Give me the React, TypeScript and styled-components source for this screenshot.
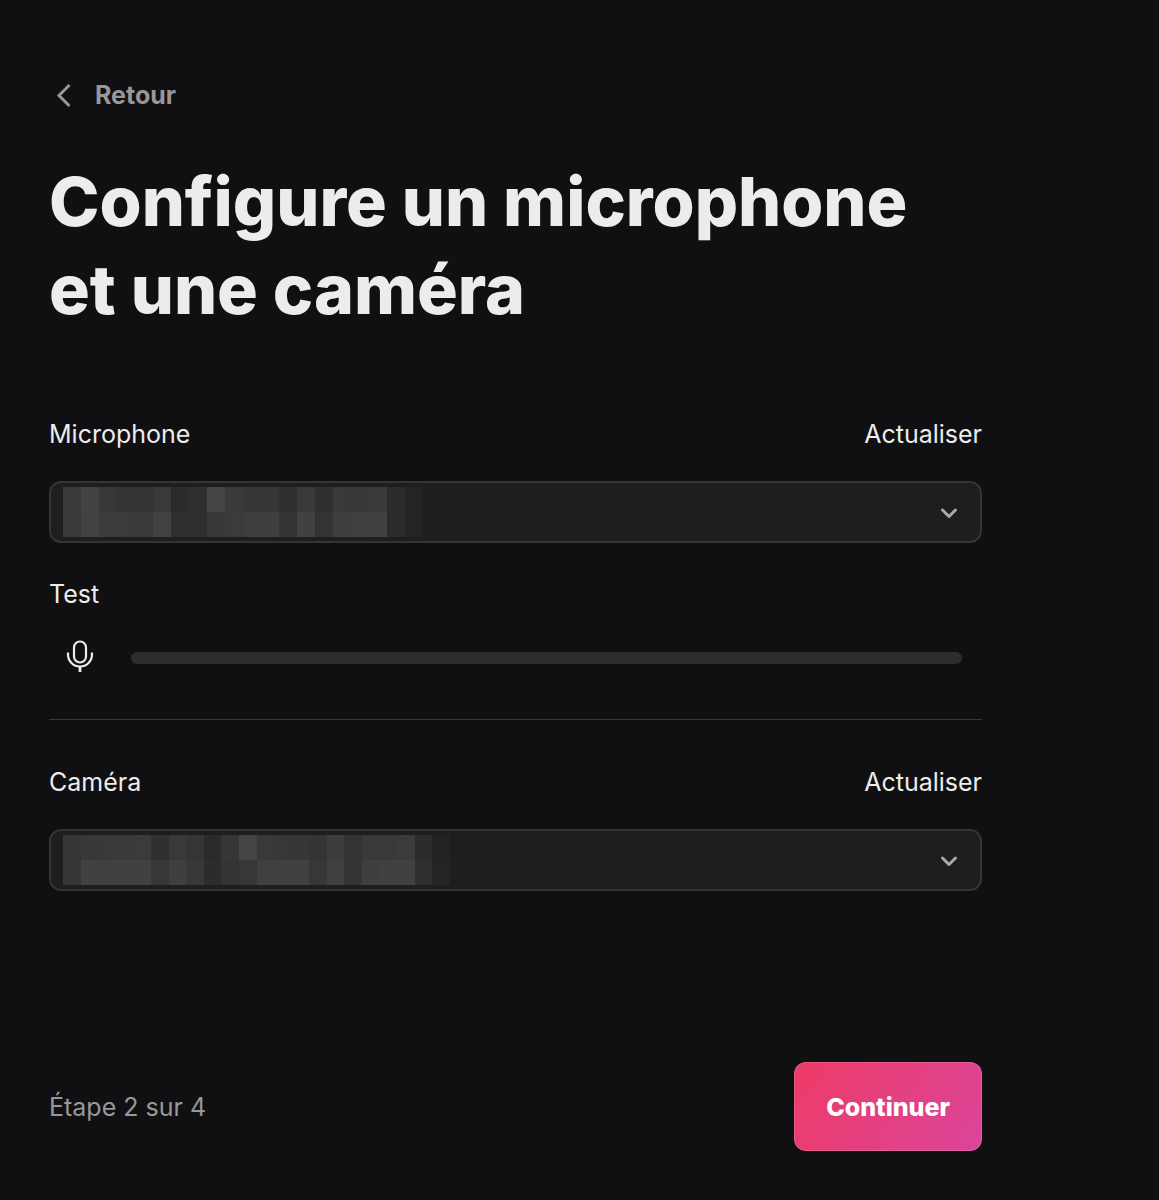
import React, { useState } from "react";
import styled, { createGlobalStyle } from "styled-components";

const GlobalStyle = createGlobalStyle`
  *, *::before, *::after { box-sizing: border-box; }
  html { background: #101012; }
  body {
    margin: 0;
    color: #ececed;
    font: 400 25px/32px Inter, "Liberation Sans", sans-serif;
  }
  button, select { font: inherit; color: inherit; }
`;

const Page = styled.main`
  display: flex;
  flex-direction: column;
  min-height: 100vh;
  padding: 79px 177px 49px 49px;
`;

const PlainButton = styled.button`
  padding: 0;
  border: 0;
  background: none;
  cursor: pointer;
`;

const BackButton = styled(PlainButton)`
  display: flex;
  align-items: center;
  align-self: flex-start;
  gap: 16px;
  color: #98989a;
  font-weight: 700;
`;

const Title = styled.h1`
  max-width: 900px;
  margin: 46px 0 0;
  font-size: 68px;
  line-height: 88px;
  font-weight: 800;
`;

const Device = styled.section<{ $top: number }>`
  margin-top: ${(p) => p.$top}px;
`;

const DeviceHeader = styled.div`
  display: flex;
  justify-content: space-between;
  margin-bottom: 31px;
`;

const SelectWrap = styled.div`
  position: relative;
  color: #a9a9ab;
`;

const SelectBox = styled.select`
  display: block;
  width: 100%;
  height: 62px;
  padding: 0 56px 0 14px;
  appearance: none;
  border: 2px solid #343436;
  border-radius: 12px;
  background: #1e1e20;
`;

const SelectArrow = styled.svg`
  position: absolute;
  top: 24px;
  right: 24px;
  pointer-events: none;
`;

const Mosaic = styled.div<{ $columns: number; $width: number }>`
  position: absolute;
  top: 6px;
  left: 14px;
  display: grid;
  grid-template-columns: repeat(${(p) => p.$columns}, 1fr);
  width: ${(p) => p.$width}px;
  height: 50px;
  pointer-events: none;
`;

const Cell = styled.span<{ $level: number }>`
  background: rgb(${(p) => p.$level}, ${(p) => p.$level}, ${(p) => p.$level + 2});
`;

const TestLabel = styled.div`
  margin-top: 35px;
`;

const TestRow = styled.div`
  display: flex;
  align-items: center;
  gap: 32px;
  height: 48px;
  margin-top: 24px;
  padding: 0 20px 0 12px;
`;

const MicIcon = styled.svg`
  flex: none;
  width: 38px;
  height: 38px;
`;

const Level = styled.progress`
  flex: 1;
  min-width: 0;
  height: 12px;
  appearance: none;
  border: 0;
  border-radius: 6px;
  background: #2d2d2f;
  overflow: hidden;

  &::-webkit-progress-bar { background: #2d2d2f; }
  &::-webkit-progress-value { background: #ececed; }
`;

const Divider = styled.hr`
  width: 100%;
  height: 1px;
  margin: 37px 0 0;
  border: 0;
  background: #3a3a3c;
`;

const Footer = styled.footer`
  display: flex;
  align-items: center;
  justify-content: space-between;
  margin-top: auto;
  color: #98989a;
`;

const ContinueButton = styled.button`
  height: 89px;
  padding: 0 31px;
  border: 1px solid rgba(255, 255, 255, 0.14);
  border-radius: 12px;
  background: linear-gradient(125deg, #ee3b66 0%, #da459a 100%) border-box;
  color: #ffffff;
  font-weight: 800;
  cursor: pointer;
`;

const MIC_TONES = [
  "3a 43 37 33 33 39 2b 2f 45 3a 36 36 30 3a 30 39 37 3a 2b 24",
  "3a 42 3c 3b 39 42 2f 2f 37 3b 3e 3f 34 41 33 3f 40 41 2c 24",
];

const CAMERA_TONES = [
  "35 38 39 3a 3b 30 39 35 2a 36 44 39 37 36 34 3d 33 39 39 3b 2c 23",
  "35 41 41 41 41 37 3f 38 2c 34 37 40 40 40 37 41 34 3f 41 41 2f 24",
];

interface DeviceSelectProps {
  id: string;
  label: string;
  tones: string[];
  maskWidth: number;
}

function DeviceSelect({ id, label, tones, maskWidth }: DeviceSelectProps) {
  const [device, setDevice] = useState("default");
  const rows = tones.map((row) => row.split(" "));
  return (
    <>
      <DeviceHeader>
        <label htmlFor={id}>{label}</label>
        <PlainButton type="button">Actualiser</PlainButton>
      </DeviceHeader>
      <SelectWrap>
        <SelectBox id={id} value={device} onChange={(e) => setDevice(e.target.value)}>
          <option value="default"></option>
        </SelectBox>
        <Mosaic $columns={rows[0].length} $width={maskWidth} aria-hidden="true">
          {rows.flat().map((tone, i) => (
            <Cell key={i} $level={parseInt(tone, 16)} />
          ))}
        </Mosaic>
        <SelectArrow width="18" height="16" viewBox="0 0 18 16" fill="none" aria-hidden="true">
          <path d="M2.5 5L9 11.5L15.5 5" stroke="currentColor" strokeWidth="3" strokeLinecap="round" strokeLinejoin="round" />
        </SelectArrow>
      </SelectWrap>
    </>
  );
}

export default function App() {
  return (
    <>
      <GlobalStyle />
      <Page>
        <BackButton type="button">
          <svg width="30" height="30" viewBox="0 0 30 30" fill="none" aria-hidden="true">
            <path d="M20.5 5L10 15.5L20.5 26" stroke="currentColor" strokeWidth="3" />
          </svg>
          Retour
        </BackButton>

        <Title>Configure un microphone et une caméra</Title>

        <Device $top={85}>
          <DeviceSelect id="microphone" label="Microphone" tones={MIC_TONES} maskWidth={360} />
          <TestLabel id="test-label">Test</TestLabel>
          <TestRow>
            <MicIcon viewBox="0 0 38 38" fill="none" stroke="#ececed" strokeWidth="2.2" aria-hidden="true">
              <rect x="13" y="2.5" width="12" height="21" rx="6" />
              <path d="M7 13.5V15.5a12 12 0 0 0 24 0v-2" />
              <path d="M19 27.5v5.5" strokeWidth="2.8" />
            </MicIcon>
            <Level aria-labelledby="test-label" value={0} max={100} />
          </TestRow>
        </Device>

        <Divider />

        <Device $top={46}>
          <DeviceSelect id="camera" label="Caméra" tones={CAMERA_TONES} maskWidth={387} />
        </Device>

        <Footer>
          <span>Étape 2 sur 4</span>
          <ContinueButton type="button">Continuer</ContinueButton>
        </Footer>
      </Page>
    </>
  );
}
